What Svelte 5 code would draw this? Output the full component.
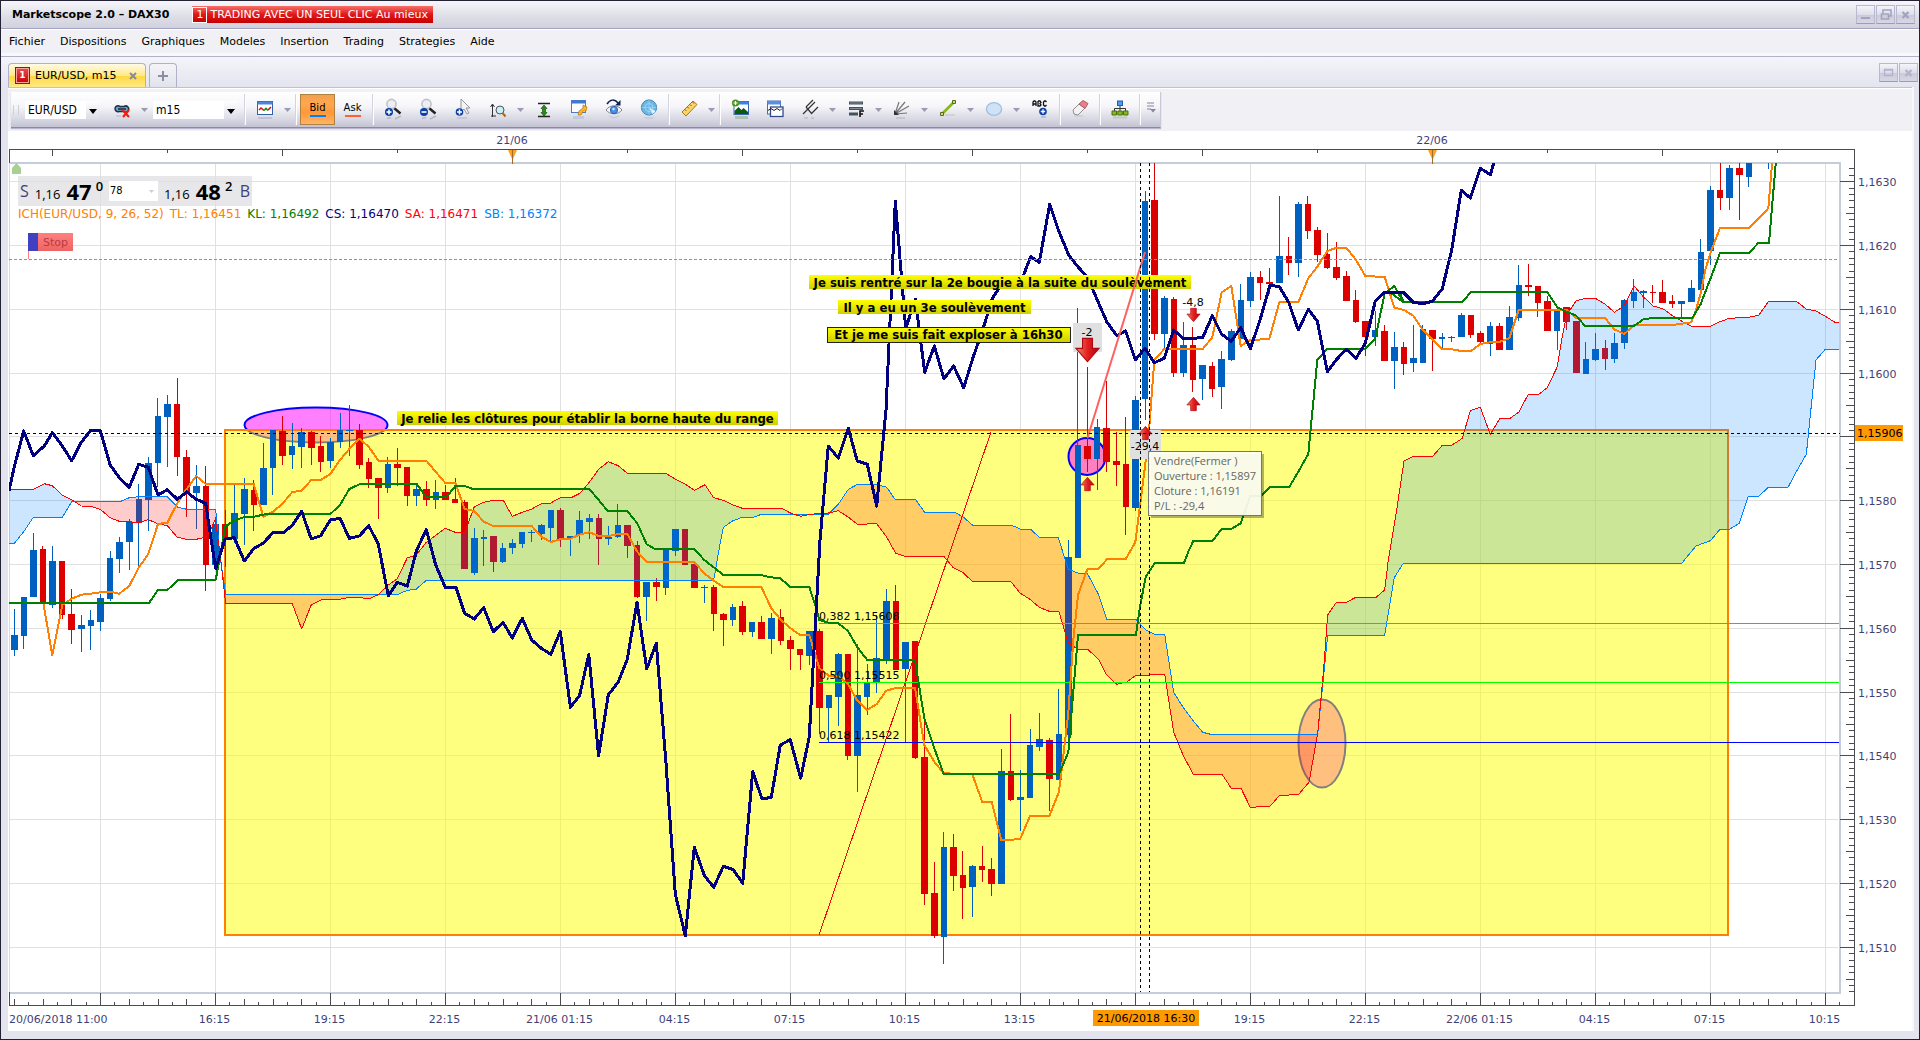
<script>
  // ---- menu and toolbar -------------------------------------------------
  const menu = ['Fichier', 'Dispositions', 'Graphiques', 'Modeles', 'Insertion', 'Trading', 'Strategies', 'Aide'];

  const tools = [
    { id: 'zoomin', label: 'Zoom avant' },
    { id: 'zoomout', label: 'Zoom arrière' },
    { id: 'pointer', label: 'Pointeur' },
    { id: 'range', label: 'Zoom sur plage', drop: true },
    { id: 'fit', label: 'Ajuster' },
    { id: 'props', label: 'Propriétés' },
    { id: 'eye', label: 'Vue' },
    { id: 'radar', label: 'Radar' },
    { id: 'sep' },
    { id: 'ruler', label: 'Règle', drop: true },
    { id: 'sep' },
    { id: 'picture', label: 'Image' },
    { id: 'windows', label: 'Fenêtres' },
    { id: 'fork', label: 'Fourchette', drop: true },
    { id: 'fibo', label: 'Fibonacci', drop: true },
    { id: 'fan', label: 'Éventail', drop: true },
    { id: 'line', label: 'Ligne', drop: true },
    { id: 'ellipse', label: 'Ellipse', drop: true },
    { id: 'abc', label: 'Texte' },
    { id: 'sep' },
    { id: 'eraser', label: 'Effacer' },
    { id: 'sep' },
    { id: 'tree', label: 'Organisation' },
    { id: 'sep' }
  ];

  // ---- scales -----------------------------------------------------------
  const barX = (k) => 14.25 + k * 9.5833;
  const gridX = Array.from({ length: 16 }, (_, i) => 100.5 + i * 115);
  const priceStep = 63.8;
  const prices = Array.from({ length: 13 }, (_, i) => ({
    y: Math.round(181.2 + i * priceStep),
    text: '1,1' + (630 - i * 10)
  }));
  // the current price badge takes the place of this label
  const labelled = prices.filter((p) => p.text !== '1,1590');
  const priceTicks = Array.from({ length: 134 }, (_, i) => i - 2)
    .map((i) => ({ y: Math.round(181.2 + i * priceStep / 10), w: i % 10 === 0 ? 14 : i % 5 === 0 ? 8 : 5 }))
    .filter((t) => t.y > 166 && t.y < 992);
  const timeTicks = Array.from({ length: 128 }, (_, i) => {
    const n = i - 6;
    return { x: Math.round(100 + n * 14.375), h: n % 8 === 0 ? 12 : n % 2 === 0 ? 6 : 3 };
  });
  const topTicks = Array.from({ length: 16 }, (_, i) => ({ x: Math.round(52 + i * 115), h: i % 2 ? 3 : 6 }));
  const times = ['16:15', '19:15', '22:15', '21/06 01:15', '04:15', '07:15', '10:15', '13:15', '', '19:15', '22:15', '22/06 01:15', '04:15', '07:15', '10:15'];

  // ---- candles: high low top bottom, in thirds of a pixel below a base --
  function bars(start, base, text) {
    return text.trim().split(/\s*,\s*/).map((row, i) => {
      const [h, l, t, b, c] = row.split(' ');
      const y = (v) => base + Number(v) / 3;
      return { x: barX(start + i), h: y(h), l: y(l), t: y(t), b: y(b), up: c === 'b' };
    });
  }
  const candles = [
    ...bars(0, 370, `716 857 795 840 b,681 836 681 798 b,489 682 540 682 b,528 700 537 699 r,528 713 573 705 b,573 747 573 735 r,657 822 732 780 r,735 846 765 777 b,720 840 750 768 b,672 783 684 756 b,543 693 564 687 b,500 609 516 567 b,447 600 455 516 b,342 590 387 459 b,261 483 279 390 b,84 351 138 279 b,75 291 102 141 b,24 318 102 262 r,240 441 261 366 r,285 477 348 369 b,288 663 348 585 r,440 600 462 585 b,420 590 462 507 r,345 520 430 508 b,324 525 357 432 b,330 483 360 405 r,219 405 294 405 b,180 375 180 294 b,138 285 183 258 r,159 297 228 255 b,174 294 186 231 b,183 285 186 234 r,198 306 228 276 r,204 294 216 273 b,129 234 180 216 b,105 258 180 183 b,162 297 180 285 r,264 354 276 327 r,324 447 324 354 r,261 369 282 354 b,234 348 282 294 r`),
    ...bars(41, 370, `291 408 291 378 r,345 408 357 378 b,333 408 357 390 r,330 417 366 390 b,345 390 366 390 r,324 399 387 399 r,390 597 396 597 r,474 615 504 609 b,480 588 501 507 b,498 606 498 576 r,519 579 534 576 b,507 552 519 534 b,486 534 486 522 b,480 516 486 489 b,462 510 465 492 b,420 513 420 474 b,414 531 420 507 r,498 558 498 507 b,423 519 450 495 b,432 507 444 456 b,432 585 444 507 r,468 525 501 507 b,402 504 465 501 b,465 564 465 528 r,513 684 525 681 r,636 753 636 681 b,624 693 636 651 r,537 675 537 654 b,477 558 477 543 b,477 585 477 585 r,582 654 582 654 r,645 699 651 654 b,645 783 651 732 r,729 828 732 750 r,702 768 711 750 b,693 795 708 786 r,756 801 756 786 b,738 807 756 807 r,729 852 744 807 b`),
    ...bars(80, 540, `207 315 231 303 r,288 390 300 327 r,327 390 327 345 r,273 375 273 348 b,267 582 273 504 r,465 606 465 504 b,339 558 342 471 b,342 660 342 648 r,312 756 465 648 b,372 525 426 471 b,225 459 354 426 b,147 372 183 360 b,135 390 183 390 r,306 606 306 387 b,303 657 303 654 r,540 1095 651 1062 r,966 1194 1059 1188 r,876 1272 921 1191 b,882 1053 921 1008 r,933 1137 1005 1044 r,975 1131 978 1041 b,918 1026 978 990 r,954 1068 987 1032 r,627 1032 693 1032 b,522 783 693 780 r,690 873 771 780 b,567 774 615 774 b,519 633 597 621 b,594 813 600 717 r,447 720 582 720 b,0 600 51 585 b`),
    ...bars(111, 150, `474 1224 885 1224 b,651 966 888 927 r,807 1020 831 927 b,693 966 834 936 r,846 1008 933 945 r,801 1155 942 1071 r,738 1083 750 1074 b,123 810 153 747 b,39 570 150 552 r,438 597 444 552 b,441 681 447 669 r,516 681 585 669 b,531 726 585 690 r,645 750 645 687 b,636 741 648 717 r,603 777 627 711 b,537 633 543 630 b,402 567 450 567 b,366 470 381 453 b,363 450 381 399 r,354 432 396 402 r,138 399 318 399 b,261 375 318 339 r,156 381 162 339 b,138 267 162 243 r,231 336 240 315 r,249 357 312 354 r,276 390 351 384 r,363 453 378 453 r,420 519 450 516 r,513 618 513 561 r,483 588 540 561 b,525 633 543 633 r,546 717 591 633 b,576 675 591 642 r,525 666 624 639 b`),
    ...bars(147, 140, `555 670 567 669 b,570 693 570 597 r,579 627 591 597 b,588 606 591 594 b,519 591 525 591 b,525 594 525 585 r,573 612 579 606 r,546 648 558 612 b,549 630 558 630 r,498 630 531 630 b,375 543 435 534 b,372 468 435 441 r,438 531 438 489 r,468 573 483 573 r,501 630 513 573 b,501 570 501 546 r,543 699 543 699 r,606 702 657 702 b,579 663 627 660 b,600 690 624 657 r,579 669 609 657 b,477 627 480 609 b,417 504 456 483 b,450 504 453 459 b,435 489 456 459 r,420 489 456 489 r,465 504 483 492 r,483 534 483 492 b,420 486 444 486 b,297 450 336 450 b,138 375 150 333 b,69 210 150 174 r,75 210 84 174 b,69 240 84 105 r,69 141 69 111 b`)
  ];

  // ---- traces: segments of x y offsets from an origin -------------------
  function seg(ox, oy, text, sx = 3, sy = 3) {
    const n = text.trim().split(/\s+/).map(Number);
    let out = '';
    for (let i = 0; i < n.length; i += 2) out += `${(ox + n[i] / sx).toFixed(1)},${(oy + n[i + 1] / sy).toFixed(1)} `;
    return out;
  }
  const tenkan =
    seg(0, 370, '130 699 157 855 187 705 215 686 244 674 272 671 301 667 330 665 358 671 388 648 416 593 445 552 474 462 502 458 532 400 560 357 589 318 617 342 761 342 790 440 819 425 847 402 877 366 905 362 934 330 962 330 991 312 1020 270 1048 237 1078 206 1106 230 1135 272') +
    seg(380, 370, '139 272 196 339 226 339 254 417 283 423 311 455 340 468 455 468 484 500 512 516 541 508 570 507 598 494 628 487 656 498 685 498 715 492 742 492 772 545 800 576 943 576 973 610 1001 632 1030 651 1144 651 1174 715') +
    seg(640, 540, '423 240 451 264 480 285 508 285 538 384 566 407 595 409 624 432 652 482 682 510 710 492 739 452 768 444 825 443 853 615 883 665 911 700 997 703 1027 786 1055 786 1084 900 1112 900 1141 896 1170 828 1228 828 1257 755 1285 520 1300 300 1314 165 1342 88 1374 88 1402 57') +
    seg(1020, 150, '317 1227 346 1177 375 950 388 830 403 630 433 597 548 597 577 562 605 427 634 408 662 588 691 570 748 567 778 457 835 457 865 385 892 350 922 303 950 293 979 293 1008 330 1036 378 1094 381 1123 473 1152 480') +
    seg(1400, 140, '40 527 69 570 97 598 127 627 155 628 184 633 213 633 241 612 271 607 300 605 328 595 356 510 500 510 529 534 615 534 643 568 673 582 702 555 817 555 874 547 888 510 902 460 916 390 931 340 960 264 1047 264 1105 205 1117 60');
  const kijun =
    seg(0, 370, '27 699 447 699 474 660 502 660 535 630 647 630 660 560 675 470 705 450 735 441 761 440 800 432 991 432 1020 405 1048 357 1080 342') +
    seg(380, 370, '110 342 139 381 200 381 226 348 254 348 278 357 628 357 656 390 683 423 742 423 772 460 800 523 825 537 943 537 973 570 1001 592 1030 615') +
    seg(640, 540, '364 105 390 112 420 114 451 141 508 141 524 190 538 240 566 248 595 250 624 273 652 322 682 360 825 360 853 535 883 625 911 702 1257 702 1285 637 1314 285') +
    seg(1060, 560, '228 225 240 140 257 50 285 9 372 9') +
    seg(1020, 150, '505 1205 520 1173 577 1173 605 1137 634 1137 662 1120 691 1038 722 1038 750 1011 808 1011 835 965 865 912 892 630 922 597 1036 597 1066 565 1094 430 1123 408 1150 457') +
    seg(1400, 140, '-30 457 0 460 11 486 187 486 213 456 442 456 472 502 500 515 529 527 555 558 702 558 730 538 760 534 877 534 902 492 931 417 960 339 1047 339 1075 309 1107 309 1128 60');
  const chikou =
    seg(0, 370, '27 363 43 290 71 183 100 257 133 228 157 188 187 228 215 272 244 217 272 181 301 181 330 284 358 323 388 352 416 283 445 292 474 375 502 359 532 388 560 366 589 388 617 400 632 500 647 595 660 555 675 507 703 503 733 573 761 536 790 519 819 488 850 488 877 466 905 424 934 507 962 497 991 450 1020 445 1048 505 1078 498 1106 467 1135 522 1150 600') +
    seg(380, 370, '25 677 52 637 82 648 110 540 139 479 167 585 196 652 228 652 254 730 283 747 311 713 340 785 369 757 397 804 427 745 455 810 484 835 512 853 541 785') +
    seg(540, 150, '53 982 69 961 85 889 102 1067 119 960 136 938 152 897 169 797', 1.742, 1.762) +
    seg(640, 540, '20 387 49 310 78 670 106 1063 136 1187 163 922 193 1006 221 1042 250 979 280 989 308 1030 338 695 366 777 394 772 421 615 451 599 482 715 508 590 522 330 540 0') +
    seg(760, 250, '205 588 235 624 265 535 292 633 322 643 350 768 378 480 393 150 406 -147 437 235 466 148 494 367 523 288 552 387 581 348 611 413 640 320 668 240 697 145 725 102 752 100 781 100') +
    seg(1020, 150, '32 320 58 337 89 163 117 245 147 317 175 352 202 380 232 450 261 517 291 557 317 543 346 630 375 595 403 638 433 625 461 540 490 566 548 563 577 497 605 553 634 574 662 533 691 596 720 510 750 406 778 410 806 457 835 540 865 478 892 513 922 665 950 628 979 598 1008 625 1036 580 1066 453 1094 427 1150 427') +
    seg(1400, 140, '0 456 11 458 40 487 69 491 97 484 127 446 155 330 184 150 211 174 241 85 271 104 284 60');
  const spanA =
    seg(0, 370, '27 358 100 358 133 341 157 347 187 376 215 389 244 408 272 409 301 418 330 443 358 454 388 455 416 458 445 449 474 461 502 467 532 502 560 508 589 508 617 501 632 480 646 447 660 550 677 701 877 701 905 777 934 704 962 690 1020 688 1048 682 1078 682 1106 687 1135 674') +
    seg(380, 370, '0 668 25 645 52 626 82 563 108 556 139 517 196 475 226 487 254 487 283 410 311 397 340 391 370 391 397 439 427 427 455 417 484 401 512 399 541 383 573 383 600 370 628 337 656 298 685 275 715 287 742 310 857 310 886 327 915 342 943 361 975 344 1001 383 1030 391 1059 405 1087 415') +
    seg(760, 250, '0 775 65 775 93 790 122 799 150 793 205 789 235 782 264 801 293 823 350 821 378 858') +
    seg(640, 540, '767 40 796 49 911 49 940 83 969 98 997 124 1112 124 1141 160 1170 178 1198 202 1228 214 1257 215') +
    seg(1060, 560, '25 250 54 267 83 268 115 297 140 345 170 373 200 366 226 347 314 343 341 517 370 587 400 643 486 643 514 685 543 685 571 742 630 739 658 707 716 703 747 667 773 520 790 340 803 165 829 127 860 127 887 112 948 112 974 90 985 0') +
    seg(1020, 150, '1130 1080 1152 933 1180 919') +
    seg(1400, 140, '98 949 127 916 155 916 187 895 211 812 241 802 271 883 300 835 330 835 356 817 385 763 416 763 442 743 472 680 485 600 500 525 529 482 556 475 586 475 615 492 643 517 673 498 702 438 730 470 760 498 790 507 820 529 850 546 875 559 931 559 960 545 988 535 1047 532 1076 526 1105 485 1190 485 1219 507 1248 513 1276 529 1305 547 1317 548');
  const spanB =
    seg(0, 370, '27 520 43 520 71 485 100 442 187 442 215 395 360 395 388 383 416 380 502 380 532 411 560 418 647 418 660 560 677 673') +
    seg(380, 370, '54 673 82 661 108 658 139 631 1001 631 1015 550 1030 472 1059 452 1087 442 1120 442 1144 433') +
    seg(760, 250, '0 793 205 793 235 763 265 718 293 703 350 703 380 712 405 748 466 748 494 787 585 787 612 803 638 826 755 826 783 838 812 838 838 862 896 862') +
    seg(640, 540, '1257 0 1285 88 1314 99 1342 100') +
    seg(1060, 560, '115 102 140 178 228 178 257 210 285 223 314 223 341 397 370 443 400 483 428 517 452 523 773 523 803 226 974 226 1003 53 1030 10') +
    seg(1400, 140, '845 1270 888 1218 931 1202 960 1168 988 1168 1018 1150 1045 1069 1076 1069 1105 1042 1164 1042 1190 993 1219 943 1248 660 1276 628 1317 628');
  const above = (line) => `9,163 ${line} 1839,163`;
  const below = (line) => `9,992 ${line} 1839,992`;

  const levels = [
    { y: 623, text: '0,382 1,15608', c: 'lv-a' },
    { y: 682, text: '0,500 1,15515', c: 'lv-b' },
    { y: 742, text: '0,618 1,15422', c: 'lv-c' }
  ];
  const notes = [
    { x: 397, y: 411, w: 381, h: 14, text: 'Je relie les clôtures pour établir la borne haute du range' },
    { x: 809, y: 275, w: 382, h: 14, text: 'Je suis rentré sur la 2e bougie à la suite du soulèvement' },
    { x: 838, y: 300, w: 193, h: 14, text: 'Il y a eu un 3e soulèvement' },
    { x: 827, y: 327, w: 243, h: 15, text: 'Et je me suis fait exploser à 16h30', box: true }
  ];
</script>

{#snippet icon(id)}
  <svg class="ico" viewBox="0 0 18 24" aria-hidden="true">
    {#if id === 'zoomin' || id === 'zoomout'}
      <path d="M10 10l6.500 5.500" stroke="#222" stroke-width="2.400" />
      <circle cx="7.500" cy="6" r="4.600" fill="#eceef2" stroke="#c0c2ca" stroke-width="1.600" />
      <path d="M11 21l6-3M3 20.500l4-1" stroke="#9a9ebc" stroke-width="1.600" opacity=".6" />
      <circle cx="5" cy="14" r="4" fill="#0b3fa8" />
      <path d="M2.500 14h5" stroke="#fff" stroke-width="1.600" />
      {#if id === 'zoomin'}<path d="M5 11.500v5" stroke="#fff" stroke-width="1.600" />{/if}
    {:else if id === 'pointer'}
      <path d="M7 1v13l3-3 3 5 2-1-3-5h4z" fill="#f4f4f6" stroke="#94969e" />
      <circle cx="5.500" cy="14" r="3.800" fill="#0b3fa8" />
      <path d="M3 14h5M5.500 11.500v5" stroke="#fff" stroke-width="1.500" />
      <path d="M3 20h10" stroke="#9a9ebc" opacity=".6" />
    {:else if id === 'range'}
      <path d="M3.500 7v12M1.500 9l2-3 2 3M2 18h5" stroke="#333" fill="none" />
      <circle cx="11" cy="12" r="4" fill="#c8f0f4" stroke="#555" />
      <path d="M13.500 15l3 3.500" stroke="#b86418" stroke-width="2" />
    {:else if id === 'fit'}
      <path d="M3 5.500h12M3 18.500h12" stroke="#222" stroke-width="1.600" />
      <path d="M9 7l3 3.500h-1.500v4H12L9 18l-3-3.500h1.500v-4H6z" fill="#2c8a1a" stroke="#14560c" stroke-width=".7" />
    {:else if id === 'props'}
      <rect x="1.500" y="2.500" width="14" height="12" fill="#fafcff" stroke="#4a7cc8" />
      <rect x="1.500" y="2.500" width="14" height="3" fill="#3d78d8" />
      <path d="M8 17l1-4 4-3 0-3 4 2-1 4-3 0-2 4z" fill="#fbb52a" stroke="#b87708" stroke-width=".7" />
      <path d="M3 18h11v3H3z" fill="#a8b8e0" opacity=".5" />
    {:else if id === 'eye'}
      <path d="M2 6c3-5 8-5 11-1" fill="none" stroke="#10204c" stroke-width="1.500" /><path d="M15.500 2v5.500H10z" fill="#10204c" />
      <path d="M1 12c4-5.500 12-5.500 16 0-4 5-12 5-16 0z" fill="#f4f6fa" stroke="#7c8090" />
      <circle cx="9" cy="12" r="3.600" fill="#4a90e8" stroke="#2860b8" /><circle cx="8.500" cy="11" r="1.200" fill="#d4ecff" />
      <path d="M4 18l5 2 5-2" fill="none" stroke="#aab4d4" opacity=".6" />
    {:else if id === 'radar'}
      <circle cx="9" cy="9.500" r="7.600" fill="#6cb8e4" stroke="#3f86b8" />
      <path d="M9 9.500l6.500 3.500a7.500 7.500 0 0 1-3 3z" fill="#e0f4ff" />
      <circle cx="9" cy="9.500" r="4" fill="none" stroke="#a4d8f4" stroke-width=".8" /><path d="M1.500 9.500h15M9 2v15" stroke="#a4d8f4" stroke-width=".6" />
      <path d="M3 19c3 3 9 3 12 0z" fill="#a8c8e0" opacity=".5" />
    {:else if id === 'ruler'}
      <path d="M2 14L13 3l4 3.500L6 18z" fill="#fbd468" stroke="#a87818" />
      <path d="M5 11.500l1.500 1.500M7.500 9l1.500 1.500M10 6.500l1.500 1.500M12.500 4l1.500 1.500" stroke="#80580c" />
    {:else if id === 'picture'}
      <rect x="3" y="3.500" width="14.500" height="13" fill="#fff" stroke="#3a66b8" /><rect x="3" y="3.500" width="14.500" height="3" fill="#3f80e0" />
      <path d="M3.500 16v-3l4-4 3 3 2-2 4.500 4v2z" fill="#0a5a14" />
      <circle cx="4.500" cy="5" r="3.600" fill="#4f9420" /><path d="M2.500 5h4M4.500 3v4" stroke="#fff" stroke-width="1.200" />
      <path d="M4 18h13v3H4z" fill="#6c9878" opacity=".4" />
    {:else if id === 'windows'}
      <rect x="1.500" y="3" width="13" height="13" fill="#fff" stroke="#4a6cb0" /><rect x="1.500" y="3" width="13" height="3.500" fill="#5a90e0" />
      <rect x="4.500" y="9" width="12.500" height="9.500" fill="#fff" stroke="#2f4c88" stroke-width="1.300" /><path d="M2 12.500l3-2 3 2 3-2 3 2 2-2" fill="none" stroke="#222" />
    {:else if id === 'fork'}
      <path d="M2 16l3-3M5 9l6 7M5 13L14 4M5 9l7-7M11 15l6-6" fill="none" stroke="#333" stroke-width="1.200" />
      <path d="M3 20h4M10 20h3" stroke="#999" opacity=".6" />
    {:else if id === 'fibo'}
      <path d="M2 5h14M2 10.500h14M2 16h9" stroke="#44525e" stroke-width="3" /><path d="M3 5h12M3 10.500h12" stroke="#8a98a4" stroke-width=".8" />
      <path d="M13 19v-6h4M13 16h3" fill="none" stroke="#111" stroke-width="1.600" />
    {:else if id === 'fan'}
      <path d="M2 16L6 4M2 16L12 4M2 16L16 8M2 16l12-1" stroke="#777" stroke-width="1.200" /><path d="M1 12v5h5z" fill="#333" />
      <path d="M3 20h9" stroke="#999" opacity=".6" />
    {:else if id === 'line'}
      <path d="M3 16L15 4" stroke="#86b818" stroke-width="2.600" /><path d="M1.500 14.500h3v3h-3zM13.500 2.500h3v3h-3z" fill="#c8dc70" stroke="#566c18" />
      <path d="M6 17h10" stroke="#b4b8a8" opacity=".7" />
    {:else if id === 'ellipse'}
      <ellipse cx="9" cy="11" rx="7.600" ry="6.300" fill="#cfe2f6" stroke="#a0bfe0" stroke-width="1.300" />
    {:else if id === 'abc'}
      <path d="M2 8V4l1-1h1l1 1v4M2 6h3M7 3v5h2l1-1-1-1.500 1-1L9 3H7M15.500 4l-1-1h-1l-1 1v3l1 1h1l1-1" fill="none" stroke="#111" stroke-width="1.300" />
      <circle cx="12" cy="13.500" r="3.800" fill="#0b3fa8" /><path d="M9.800 13.500h4.400M12 11.300v4.400" stroke="#fff" stroke-width="1.300" />
      <path d="M10 19h5" stroke="#90a4cc" stroke-width="2" opacity=".5" />
    {:else if id === 'eraser'}
      <path d="M2 12l6-6 6 4-7 7-4-1z" fill="#f4f2f2" stroke="#908c90" /><path d="M8 6l4-3.500 5 3-3 5z" fill="#e8808c" stroke="#a85c68" />
      <path d="M3 18h9" stroke="#aaa" opacity=".5" />
    {:else if id === 'tree'}
      <path d="M9 7v6M3.500 14v-3.500h11V14" fill="none" stroke="#333" /><rect x="6.500" y="3" width="5" height="4.500" fill="#4a9cf0" stroke="#1f60b0" />
      <path d="M1 13h4.500v4H1zM6.800 13h4.500v4H6.800zM12.500 13H17v4h-4.500z" fill="#86b820" stroke="#4c7010" /><path d="M2 19.500h14" stroke="#a8b890" stroke-width="2" opacity=".5" />
    {:else if id === 'chart'}
      <rect x="1.500" y="3.500" width="15" height="13" fill="#fff" stroke="#3060a8" /><rect x="1.500" y="3.500" width="15" height="3" fill="#4a86e0" />
      <path d="M3 12l2-2 3 2.500" fill="none" stroke="#e01010" stroke-width="1.600" /><path d="M8 12.500l2-2 2 2" fill="none" stroke="#109010" stroke-width="1.600" /><path d="M12 12l3-3" stroke="#e01010" stroke-width="1.600" />
      <path d="M2 20h14" stroke="#b0a8c0" stroke-width="2" opacity=".5" />
    {:else if id === 'link'}
      <path d="M2 10.500a3 3 0 0 1 5-2h4a3 3 0 1 1 0 5H6a3 3 0 0 1-4-3z" fill="#7ba0c0" stroke="#1c3048" stroke-width="1.500" /><path d="M5 11h8" stroke="#1c3048" stroke-width="1.600" />
      <path d="M9.500 12l6.500 7M16 12l-6 7" stroke="#f02010" stroke-width="2.200" />
      <path d="M3 18h5" stroke="#99a" opacity=".5" />
    {/if}
  </svg>
{/snippet}

{#snippet drop()}
  <svg class="drop" viewBox="0 0 7 4" aria-hidden="true"><path d="M0 0h7L3.500 4z" fill="#9a9ab2" /></svg>
{/snippet}

{#snippet arrow(x, y, s, up)}
  <path transform="translate({x} {y}) scale({s} {up ? -s : s})" d="M-3-7h6v6h4L0 7-7-1h4z" fill="url(#arrowRed)" stroke="#b00810" stroke-width="0.700" />
{/snippet}

<div class="window">
  <header class="title">
    <h1>Marketscope 2.0 – DAX30</h1>
    <span class="oneclick"><b>1</b>TRADING AVEC UN SEUL CLIC Au mieux</span>
    <div class="winbtns">
      <button aria-label="Réduire"><svg viewBox="0 0 17 17"><path d="M4 12h9" stroke="#a3a3bf" stroke-width="2" /></svg></button>
      <button aria-label="Restaurer"><svg viewBox="0 0 17 17"><path d="M6 7V4h8v6h-2M4.500 8h7v5h-7z" fill="none" stroke="#a3a3bf" stroke-width="1.600" /></svg></button>
      <button aria-label="Fermer"><svg viewBox="0 0 17 17"><path d="M5.500 6l6 6M11.500 6l-6 6" stroke="#a3a3bf" stroke-width="2.400" /></svg></button>
    </div>
  </header>

  <nav class="menu">
    {#each menu as item}<a href="#{item}">{item}</a>{/each}
  </nav>

  <main>
    <div class="tabs">
      <div class="tab"><b>1</b><span>EUR/USD, m15</span><button aria-label="Fermer l'onglet"><svg viewBox="0 0 8 8"><path d="M1 1l6 6M7 1L1 7" stroke="#8a8a9c" stroke-width="2" /></svg></button></div>
      <button class="newtab" aria-label="Nouvel onglet"><svg viewBox="0 0 10 10"><path d="M0 5h10M5 0v10" stroke="#8c8ca4" stroke-width="2" /></svg></button>
      <div class="winbtns inner">
        <button aria-label="Agrandir"><svg viewBox="0 0 17 17"><path d="M4.500 5.500h8v6h-8zM4 6h9" fill="none" stroke="#b3b3cb" stroke-width="1.400" /></svg></button>
        <button aria-label="Fermer le graphique"><svg viewBox="0 0 17 17"><path d="M5.500 6l6 6M11.500 6l-6 6" stroke="#b3b3cb" stroke-width="2.400" /></svg></button>
      </div>
    </div>

    <div class="content">
      <div class="strip">
        <div class="toolbar" role="toolbar" aria-label="Outils">
          <span class="grip"></span>
          <label class="combo sym"><select aria-label="Symbole"><option>EUR/USD</option></select><i></i></label>
          <button class="tool wide" aria-label="Lier">{@render icon('link')}{@render drop()}</button>
          <label class="combo per"><select aria-label="Période"><option>m15</option></select><i></i></label>
          <span class="sep before"></span>
          <button class="tool wide" aria-label="Type de graphique">{@render icon('chart')}{@render drop()}</button>
          <span class="sep after"></span>
          <button class="side on">Bid<i></i></button>
          <button class="side">Ask<i></i></button>
          <span class="sep"></span>
          {#each tools as t}
            {#if t.id === 'sep'}<span class="sep"></span>
            {:else}<button class="tool" class:wide={t.drop} aria-label={t.label}>{@render icon(t.id)}{#if t.drop}{@render drop()}{/if}</button>{/if}
          {/each}
          <button class="more" aria-label="Plus d'outils"><svg viewBox="0 0 9 11"><path d="M0 1h7M0 4h7M0 7h4" stroke="#8484a0" stroke-width="1.200" /><path d="M3 7h6L6 10.500z" fill="#8484a0" /></svg></button>
        </div>
      </div>

      <div class="chart">
        <svg class="plot" viewBox="8 131 1904 900" role="img" aria-label="Graphique EUR/USD m15">
          <defs>
            <linearGradient id="noteFill" x2="0" y2="1"><stop offset="0" stop-color="#ffff00" /><stop offset="1" stop-color="#cfcf00" /></linearGradient>
            <linearGradient id="arrowRed" x2="1" y2="0"><stop offset="0" stop-color="#e88a68" /><stop offset=".5" stop-color="#e42020" /><stop offset="1" stop-color="#b80010" /></linearGradient>
            <linearGradient id="stopFill" x2="0" y2="1"><stop offset="0" stop-color="#ff8080" /><stop offset="1" stop-color="#ee6464" /></linearGradient>
            <clipPath id="area"><rect x="9" y="163" width="1830" height="829" /></clipPath>
            <clipPath id="aboveA"><polygon points={above(spanA)} /></clipPath>
            <clipPath id="aboveB"><polygon points={above(spanB)} /></clipPath>
          </defs>

          <g class="crisp">
            {#each gridX as x}<line class="grid" x1={x} y1="164" x2={x} y2="992" />{/each}
            {#each prices as p}<line class="grid" x1="9" y1={p.y + 0.5} x2="1838" y2={p.y + 0.5} />{/each}
            <path d="M9 162.500H1839.500V992.500H9" fill="none" stroke="#c4ceda" stroke-width="2" />
            <path d="M9.500 163V992" stroke="#d8d8e0" />
            <path d="M9.500 163V149.500H1854.500V1005.500H9.500V992" fill="none" stroke="#4c4c50" />
            {#each topTicks as t}<line class="tick" x1={t.x + 0.5} y1="150" x2={t.x + 0.5} y2={150 + t.h} />{/each}
            {#each timeTicks as t}<line class="tick" x1={t.x + 0.5} y1={1005 - t.h} x2={t.x + 0.5} y2="1005" />{/each}
            {#each priceTicks as t}<line class="tick" x1={1854 - t.w} y1={t.y + 0.5} x2="1854" y2={t.y + 0.5} />{/each}
          </g>

          <path d="M508 150h9l-4.500 10zM1428 150h9l-4.500 10z" fill="#ffa020" />
          <path d="M512.500 150v14M1432.500 150v14" stroke="#a46c20" />
          <text class="axis mid" x="512" y="144">21/06</text>
          <text class="axis mid" x="1432" y="144">22/06</text>
          <path d="M12 174v-6l4.500-5 4.500 5v6z" fill="#a9d094" />

          <g clip-path="url(#area)">
            <g class="marks">
              <ellipse cx="316" cy="425" rx="71.500" ry="17.500" />
              <ellipse cx="1322" cy="743.500" rx="23.500" ry="44" />
            </g>
            <rect class="crisp" x="225" y="430" width="1503" height="505" fill="#ffff00" fill-opacity=".5" stroke="#ff8000" stroke-width="2" />
            <ellipse class="circle" cx="1087" cy="456.500" rx="18.500" ry="18.500" />

            <g class="crisp">
              {#each candles as c}
                <g class={c.up ? 'up' : 'down'}>
                  <rect x={Math.round(c.x - 0.5)} y={c.h} width="1" height={c.l - c.h} />
                  <rect x={c.x - 3.3} y={c.t} width="6.600" height={Math.max(1, c.b - c.t)} />
                </g>
              {/each}
              <rect class="up" x="1768" y="163" width="1" height="6" />
            </g>

            <polygon points={below(spanA)} clip-path="url(#aboveB)" fill="#0080ff" fill-opacity=".2" />
            <polygon points={below(spanB)} clip-path="url(#aboveA)" fill="#ff0000" fill-opacity=".2" />

            <g class="trace crisp">
              <polyline points={spanB} stroke="#0080ff" />
              <polyline points={spanA} stroke="#ff0000" />
              <path d="M819 935L991 432" stroke="#ff0000" />
              {#each levels as l}<line class={l.c} x1="819" x2="1839" y1={l.y + 0.5} y2={l.y + 0.5} />{/each}
              <polyline points={tenkan} stroke="#ff8000" stroke-width="2" />
              <polyline points={kijun} stroke="#008000" stroke-width="2" />
              <polyline points={chikou} stroke="#000080" stroke-width="3" />
            </g>
          </g>

          {#each levels as l}<text class="black" x="819" y={l.y - 3}>{l.text}</text>{/each}

          {#each notes as n}
            <rect class="crisp" x={n.x} y={n.y} width={n.w} height={n.h} fill="url(#noteFill)" stroke={n.box ? '#222' : 'none'} />
            <text class="note mid" x={n.x + n.w / 2} y={n.y + 12}>{n.text}</text>
          {/each}

          <path d="M1087.500 438L1145 252" stroke="#ff6060" stroke-width="2" />
          <path class="crisp" d="M9 259.500H1837" stroke="#ff6464" stroke-dasharray="3 2" />
          <path d="M28.500 251v8" stroke="#ff8080" />

          <rect x="1073" y="323" width="29" height="29" rx="1" fill="#e0e0e0" />
          <rect x="1130" y="430" width="31" height="29" rx="1" fill="#e0e0e0" />
          {@render arrow(1087.5, 350, 1.65, false)}
          {@render arrow(1193.5, 315, 0.95, false)}
          {@render arrow(1193.5, 404, 0.95, true)}
          {@render arrow(1087.5, 484, 0.95, true)}
          {@render arrow(1145.5, 433, 0.95, true)}
          <text class="black mid" x="1087" y="336">-2</text>
          <text class="black mid" x="1193" y="306">-4,8</text>
          <text class="black mid" x="1145" y="450">-29,4</text>

          <path class="crisp" d="M9 433.500H1840M1140.500 163V992M1149.500 163V992" stroke="#000" stroke-dasharray="3 3" />

          <rect x="1151" y="454" width="113" height="64" fill="#000" opacity=".3" />
          <rect class="crisp" x="1148.500" y="451.500" width="113" height="64" fill="#fffff4" fill-opacity=".93" stroke="#767676" />
          <g class="tip">
            <text x="1154" y="465">Vendre(Fermer )</text>
            <text x="1154" y="480">Ouverture : 1,15897</text>
            <text x="1154" y="495">Cloture : 1,16191</text>
            <text x="1154" y="510">P/L : -29,4</text>
          </g>

          {#each labelled as p}<text class="axis" x="1858" y={p.y + 5}>{p.text}</text>{/each}
          <rect x="1855" y="425" width="48" height="16" fill="#ff9900" />
          <text class="black" x="1857" y="437">1,15906</text>

          <text class="axis" x="9" y="1023">20/06/2018 11:00</text>
          {#each times as t, i}{#if t}<text class="axis mid" x={gridX[i + 1] - 1} y="1023">{t}</text>{/if}{/each}
          <rect x="1093" y="1010" width="106" height="16" fill="#ff9900" />
          <text class="black mid" x="1146" y="1022">21/06/2018 16:30</text>

          <rect x="28" y="233" width="10" height="18" fill="#4040c0" />
          <rect x="38" y="233" width="35" height="18" fill="url(#stopFill)" />
          <text x="43" y="246" fill="#b83c3c">Stop</text>
        </svg>

        <div class="overlay">
          <div class="quote">
            <span class="side-l">S</span>
            <span class="small">1,16</span><b>47</b><sup>0</sup>
            <label class="lot"><select aria-label="Montant"><option>78</option></select>{@render drop()}</label>
            <span class="small">1,16</span><b>48</b><sup>2</sup>
            <span class="side-l">B</span>
          </div>
          <div class="legend">
            <span class="o">ICH(EUR/USD, 9, 26, 52)</span>
            <span class="o">TL: 1,16451</span>
            <span class="g">KL: 1,16492</span>
            <span class="n">CS: 1,16470</span>
            <span class="r">SA: 1,16471</span>
            <span class="b">SB: 1,16372</span>
          </div>
        </div>
      </div>
    </div>
  </main>
</div>

<style>
  :global(body) { margin: 0; background: #e4e4ef; }
  .window {
    box-sizing: border-box;
    min-height: 100vh;
    border: 1px solid #222234;
    background: #e4e4ef;
    font: 11px/14px 'DejaVu Sans', Verdana, sans-serif;
    color: #000;
    display: flex;
    flex-direction: column;
  }
  button { font: inherit; color: inherit; padding: 0; border: 0; background: none; }
  .title {
    height: 27px;
    display: flex;
    align-items: center;
    gap: 23px;
    padding: 0 4px 0 11px;
    background: linear-gradient(#f7f6fb, #dcdde6 60%, #d0d2de);
    border-bottom: 1px solid #a3a3c2;
  }
  h1 { margin: 0; font: bold 11px/14px 'DejaVu Sans', sans-serif; }
  .oneclick {
    display: flex;
    align-items: center;
    height: 17px;
    padding-right: 5px;
    gap: 3px;
    color: #fff;
    background: linear-gradient(#f77068, #e01818 50%, #c40000);
  }
  .oneclick b { font-weight: normal; border: 1px solid #fff; width: 13px; height: 14px; line-height: 14px; text-align: center; }
  .winbtns { margin-left: auto; display: flex; gap: 1px; }
  .winbtns button {
    width: 19px;
    height: 19px;
    border: 1px solid #b8b8d0;
    border-bottom-color: #9c9cb8;
    background: linear-gradient(#f4f4fa, #dedeea 50%, #cacadb 52%, #d6d6e4);
  }
  .winbtns svg { width: 17px; height: 17px; display: block; }
  .menu {
    height: 25px;
    display: flex;
    align-items: center;
    gap: 15px;
    padding: 0 8px 2px;
    background: #f0f0f5;
    border-bottom: 1px solid #b0b0c8;
    box-shadow: inset 0 -3px 0 #f8f8fc, inset 0 1px 0 #fff;
  }
  .menu a { color: #000; text-decoration: none; }
  main { flex: 1; padding: 0 7px 8px; background: linear-gradient(#f4f4fa, #e4e4ef 30px); }
  .tabs { height: 30px; display: flex; align-items: flex-end; gap: 3px; margin-right: -6px; }
  .tab, .newtab {
    box-sizing: border-box;
    height: 24px;
    border: 1px solid #b0b0c8;
    border-bottom: 0;
    border-radius: 4px 4px 0 0;
    display: flex;
    align-items: center;
  }
  .tab { gap: 5px; padding: 0 8px 0 6px; background: linear-gradient(#fffbe6, #ffe98a 50%, #ffd93c 52%, #ffe98a); }
  .tab b { width: 13px; height: 15px; line-height: 15px; border: 1px solid #a01010; box-shadow: inset 0 0 0 1px #f9a0a0; background: linear-gradient(#e85050, #c80000); color: #fff; text-align: center; font-size: 9px; }
  .tab button, .tab svg { width: 8px; height: 8px; display: block; }
  .tab button { margin-left: 7px; }
  .newtab { width: 28px; justify-content: center; background: linear-gradient(#f4f4f8, #e2e2ec); }
  .newtab svg { width: 10px; height: 10px; }
  .inner { align-self: center; padding-top: 1px; }
  .content { border-top: 1px solid #c0c0d0; background: #fff; box-shadow: 2px 0 0 #f8f8fc; }
  .strip { box-sizing: border-box; height: 43px; padding: 3px 3px 6px; background: #f0f0f5; border-top: 1px solid #fff; display: flex; }
  .toolbar {
    box-sizing: border-box;
    height: 36px;
    display: flex;
    align-items: center;
    background: linear-gradient(#fff, #f6f6fa 40%, #d6d6e2 80%, #c2c2d2);
    border-right: 1px solid #c8c8d8;
    border-bottom: 1px solid #8a8aa6;
    box-shadow: 0 1px 1px #b8b8cc;
  }
  .grip { width: 4px; height: 10px; margin: 0 6px 0 2px; border-right: 1px solid #d0d0dc; border-left: 1px solid #d0d0dc; }
  .combo { height: 18px; display: flex; background: #fff; }
  .combo select, .lot select { appearance: none; border: 0; background: none; padding: 0 0 0 3px; margin: 0; color: #000; font: 12px/16px 'DejaVu Sans Condensed', 'Noto Sans', sans-serif; flex: 1; min-width: 0; }
  .combo i { width: 13px; background: linear-gradient(#fff, #dcdce8); display: flex; align-items: center; justify-content: center; }
  .combo i::after { content: ''; border: 4px solid transparent; border-top: 5px solid #000; border-bottom: 0; margin-top: 4px; }
  .sym { width: 74px; margin-right: 5px; }
  .per { width: 84px; margin-left: 3px; }
  .sep { width: 1px; height: 31px; margin: 0 2px; background: #d4d4e0; box-shadow: 1px 0 0 #fff; }
  .before { margin-left: 7px; }
  .after { margin-right: 4px; }
  .tool { width: 35px; height: 31px; display: flex; align-items: center; padding-left: 9px; box-sizing: border-box; }
  .wide { width: 46px; gap: 10px; }
  .ico { width: 18px; height: 24px; flex: none; }
  .drop { width: 7px; height: 4px; flex: none; }
  .side { width: 35px; height: 31px; box-sizing: border-box; font: 10px/12px 'DejaVu Sans', sans-serif; display: flex; flex-direction: column; align-items: center; justify-content: center; gap: 1px; }
  .side i { width: 16px; height: 2px; background: #ff6030; }
  .on { border: 1px solid #b08040; background: linear-gradient(#f0a050, #ffa850 30%, #ff9838 60%, #ffb468); }
  .on i { background: #0080ff; }
  .more { width: 18px; height: 31px; }
  .more svg { width: 9px; height: 11px; }

  .chart { position: relative; }
  .plot { display: block; width: 100%; height: auto; font: 11px 'DejaVu Sans', Verdana, sans-serif; }
  .crisp { shape-rendering: crispEdges; }
  .grid { stroke: #e0e0e0; }
  .tick { stroke: #4c4c50; }
  .axis { fill: #3f3f78; }
  .black { fill: #000; }
  .mid { text-anchor: middle; }
  .marks ellipse, .circle { fill: #ff00ff; fill-opacity: .5; stroke: #0000ff; stroke-width: 2; }
  .up { fill: #0060c0; }
  .down { fill: #dc0000; }
  .trace { fill: none; stroke-linejoin: round; }
  .lv-a { stroke: #ff6a00; }
  .lv-b { stroke: #00ff00; }
  .lv-c { stroke: #0000ff; }
  .note { font: bold 13px 'DejaVu Sans Condensed', 'DejaVu Sans', sans-serif; fill: #000; }
  .tip { font: 11px 'Open Sans', 'Noto Sans', sans-serif; fill: #666660; }

  .overlay { position: absolute; left: 10px; top: 45px; }
  .quote { width: 234px; height: 30px; box-sizing: border-box; padding: 0 2px; display: flex; align-items: center; background: rgba(222, 222, 226, .72); font-family: 'Open Sans', 'Noto Sans', sans-serif; }
  .side-l { font-size: 16px; color: #3f3f78; }
  .side-l:first-child { margin-right: 6px; }
  .side-l:last-child { margin-left: auto; }
  .small { font-size: 13px; padding-top: 6px; }
  .quote b { font-size: 22px; margin: 0 4px 0 6px; }
  .quote sup { font-size: 13px; font-weight: 600; line-height: 14px; padding-bottom: 10px; vertical-align: baseline; }
  .lot { width: 49px; height: 20px; margin: 0 6px; background: #fff; display: flex; align-items: center; padding-right: 4px; box-sizing: border-box; }
  .lot select { font-size: 11px; padding-left: 1px; }
  .lot .drop { width: 5px; height: 3px; opacity: .5; }
  .legend { display: flex; gap: 6px; white-space: nowrap; margin-top: 1px; font-size: 12px; }
  .o { color: #ff8000; }
  .g { color: #008000; }
  .n { color: #000080; }
  .r { color: #ff0000; }
  .b { color: #0080ff; }
</style>
